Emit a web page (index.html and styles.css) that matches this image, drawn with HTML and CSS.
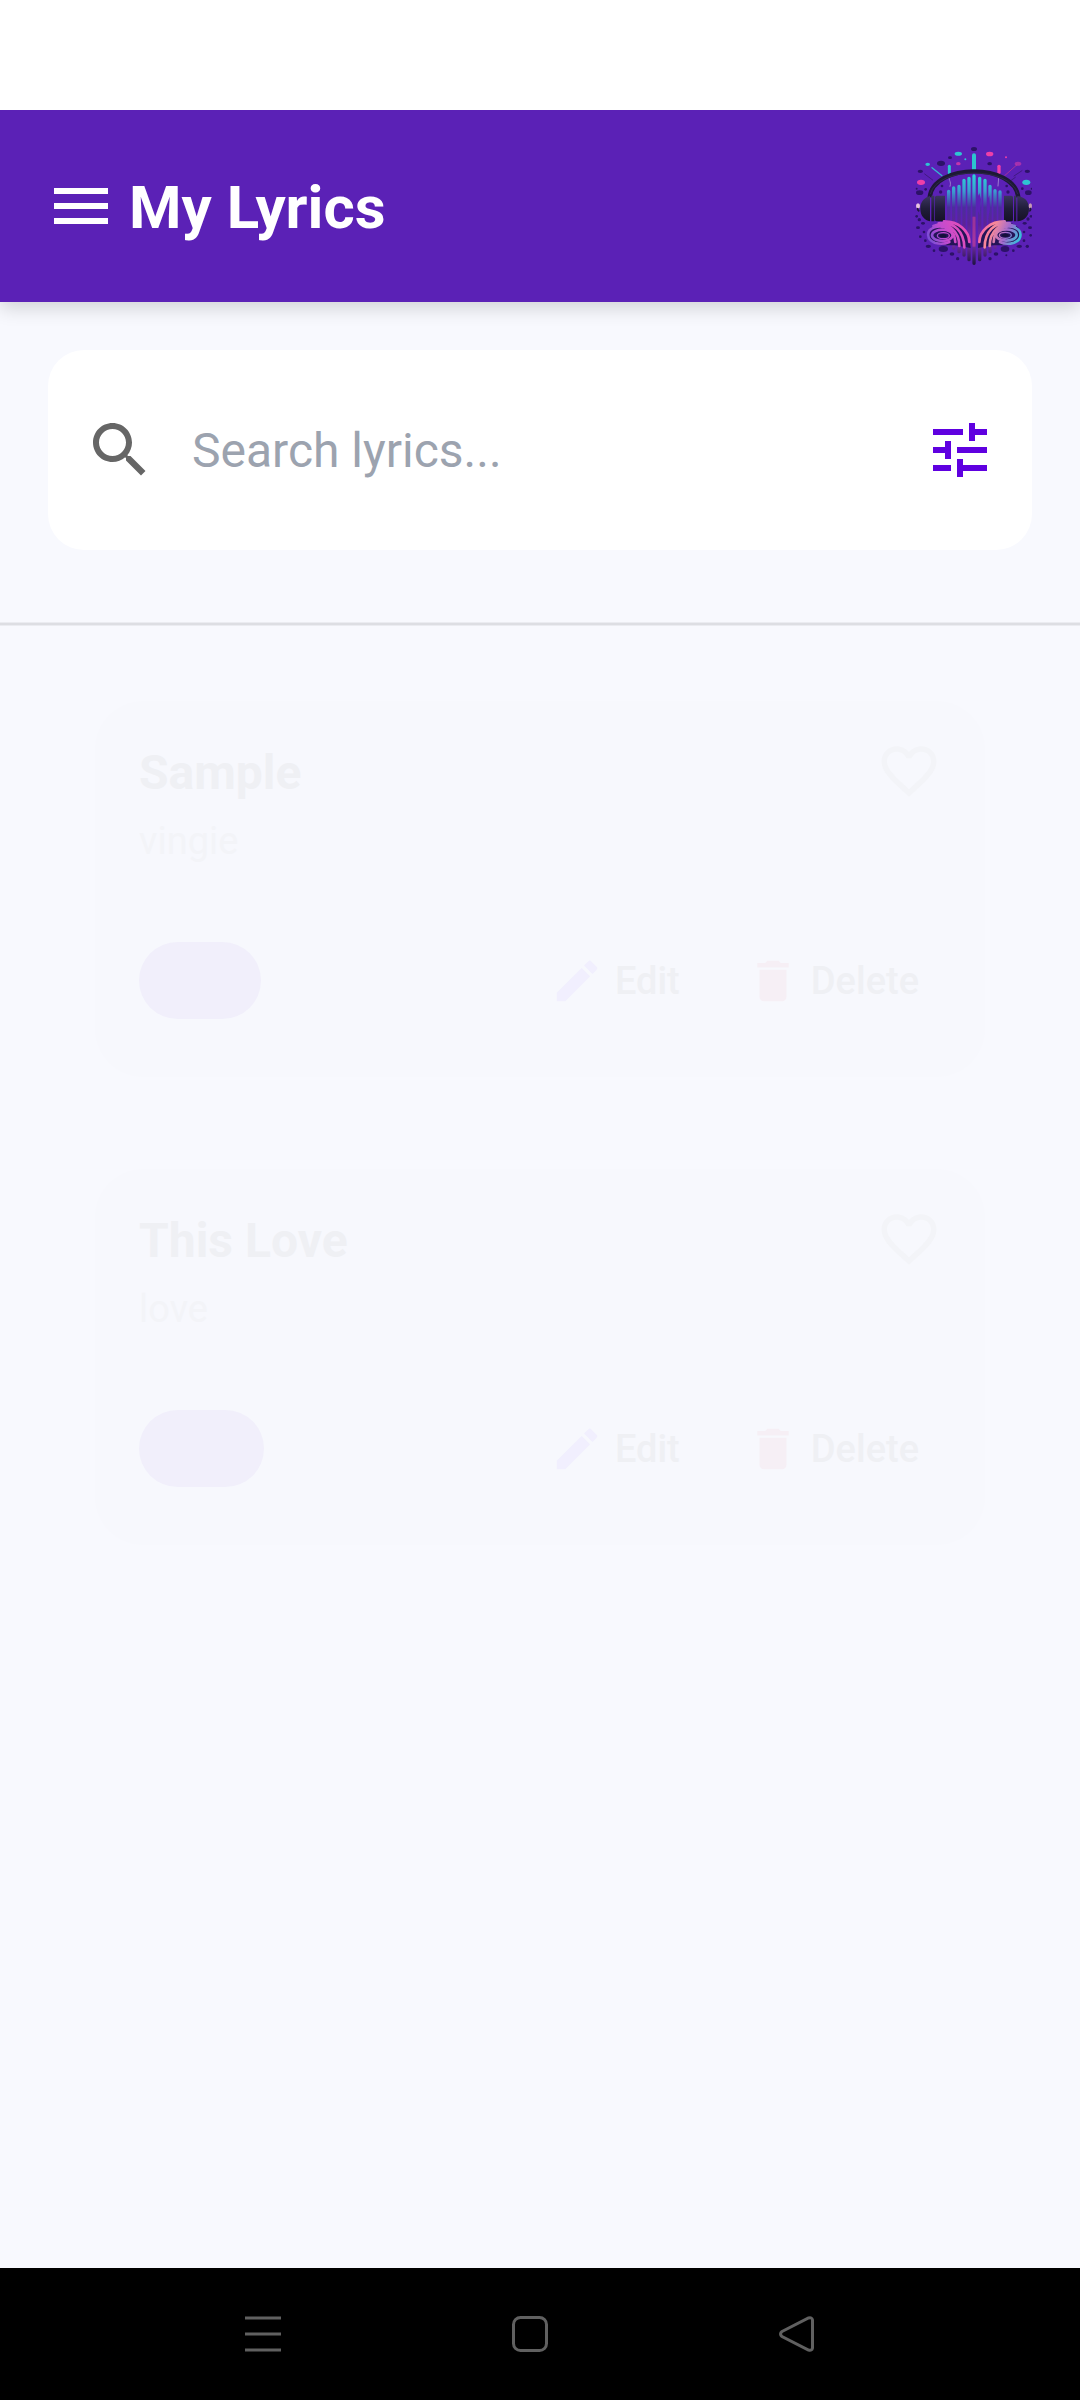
FILE: index.html
```html
<!DOCTYPE html>
<html lang="en">
<head>
<meta charset="utf-8">
<meta name="viewport" content="width=device-width, initial-scale=1">
<title>My Lyrics</title>
<link rel="stylesheet" href="styles.css">
</head>
<body>
<svg class="defs" aria-hidden="true">
  <symbol id="heart" viewBox="0 0 24 24"><path d="M16.5 3c-1.74 0-3.41.81-4.5 2.09C10.91 3.81 9.24 3 7.5 3 4.42 3 2 5.42 2 8.5c0 3.78 3.4 6.86 8.55 11.54L12 21.35l1.45-1.32C18.6 15.36 22 12.28 22 8.5 22 5.42 19.58 3 16.5 3zm-4.4 15.55l-.1.1-.1-.1C7.14 14.24 4 11.39 4 8.5 4 6.5 5.5 5 7.5 5c1.54 0 3.04.99 3.57 2.36h1.87C13.46 5.99 14.96 5 16.5 5c2 0 3.5 1.5 3.5 3.5 0 2.89-3.14 5.74-7.9 10.05z"/></symbol>
  <symbol id="pencil" viewBox="0 0 24 24"><path d="M3 17.25V21h3.75L17.81 9.94l-3.75-3.75L3 17.25zM20.71 7.04a1 1 0 0 0 0-1.41l-2.34-2.34a1 1 0 0 0-1.41 0l-1.83 1.83 3.75 3.75 1.83-1.83z"/></symbol>
  <symbol id="trash" viewBox="0 0 24 24"><path d="M6 19c0 1.100.9 2 2 2h8c1.100 0 2-.9 2-2V7H6v12zM19 4h-3.500l-1-1h-5l-1 1H5v2h14V4z"/></symbol>
</svg>
<div class="app">
  <header class="topbar">
    <button class="icon-btn" type="button" aria-label="Menu">
      <svg class="icon" viewBox="0 0 24 24" fill="#fff"><path d="M3 18h18v-2H3v2zm0-5h18v-2H3v2zm0-7v2h18V6H3z"/></svg>
    </button>
    <h1 class="title">My Lyrics</h1>
    <svg class="logo" viewBox="66 78 360 360" role="img" aria-label="Headphones logo">
      <defs>
        <linearGradient id="bars" gradientUnits="userSpaceOnUse" x1="0" y1="165" x2="0" y2="435">
          <stop offset="0" stop-color="#2ad3d6"/><stop offset=".18" stop-color="#3b9cd0"/><stop offset=".36" stop-color="#4a2f9c"/><stop offset=".55" stop-color="#5d2396"/><stop offset=".75" stop-color="#7a2fae"/><stop offset="1" stop-color="#1d1440"/>
        </linearGradient>
        <linearGradient id="spiralL" gradientUnits="userSpaceOnUse" x1="112" y1="370" x2="235" y2="310">
          <stop offset="0" stop-color="#6a4fd6"/><stop offset=".4" stop-color="#c04bd0"/><stop offset="1" stop-color="#f04fb4"/>
        </linearGradient>
        <linearGradient id="spiralR" gradientUnits="userSpaceOnUse" x1="270" y1="310" x2="395" y2="365">
          <stop offset="0" stop-color="#f45bb0"/><stop offset=".3" stop-color="#f98a98"/><stop offset=".62" stop-color="#a26bd0"/><stop offset="1" stop-color="#22d0dc"/>
        </linearGradient>
        <linearGradient id="cup" x1="0" y1="0" x2="0" y2="1">
          <stop offset="0" stop-color="#3b3560"/><stop offset=".5" stop-color="#211d3a"/><stop offset="1" stop-color="#161226"/>
        </linearGradient>
      </defs>
      <g stroke="url(#bars)" stroke-width="10" stroke-linecap="round" fill="none">
        <path d="M176 214l.1 160M191 204l.1 180M207 199l.1 196M222 181l.1 224M237 175l.1 244M252 168l.1 262M269 175l.1 244M285 181l.1 224M300 199l.1 196M315 212l.1 170M330 216l.1 150"/>
      </g>
      <path d="M262 232l6-12 5 18-4 48-7-18zM292 240l6-14 2 40-6 30z" fill="#5b21b6"/>
      <g stroke-linecap="round" stroke-width="9" fill="none">
        <path d="M252 106v40" stroke="#2cc4cf" stroke-width="12"/>
        <path d="M178 139v20" stroke="#2cc4cf"/>
        <path d="M327 139v18" stroke="#ee3fa8" stroke-width="10"/>
        <path d="M178 165c-6 14 8 18 2 34M327 162l-3 36" stroke="#9b7bd0" stroke-width="3"/>
        <path d="M126 143l30 24" stroke="#35b7d0" stroke-width="4"/>
        <path d="M104 162l24 18M396 152l-24 16M354 188l22-16" stroke="#401a80" stroke-width="3"/>
        <path d="M380 135l-36 32" stroke="#a6309c" stroke-width="3"/>
      </g>
      <path d="M119 232C130 128 374 128 385 232" fill="none" stroke="#1d1935" stroke-width="13"/>
      <path d="M121 222C142 138 362 138 383 222" fill="none" stroke="#353052" stroke-width="2"/>
      <g fill="url(#cup)">
        <path d="M120 228v76c-16-4-29-16-29-38s13-34 29-38zM124 227h9v77h-9zM135 232q0-5 5-5h25v77h-25q-5 0-5-5zM342 227h22q5 0 5 5v67q0 5-5 5h-22zM372 227h7v77h-7zM382 228c20 2 35 14 35 38s-15 36-35 38z"/>
      </g>
      <ellipse cx="84" cy="258" rx="6" ry="8" fill="#e9c4e0"/><ellipse cx="421" cy="258" rx="5" ry="8" fill="#c79bb4"/>
      <path d="M84 264q-3 6 4 10M420 264q4 6-2 10" fill="none" stroke="#201738" stroke-width="5"/>
      <g fill="#241458">
        <path d="M112 346c0-22 24-36 52-44 44-2 76 28 78 82l-34-6c-16-4-48 0-60-4-20-2-36-12-36-28z"/>
        <path d="M394 344c0-22-24-34-50-42-44-2-78 28-80 82l34-6c16-4 48 0 60-4 20-2 36-12 36-30z"/>
      </g>
      <g fill="none" stroke="url(#spiralL)" stroke-width="8" stroke-linecap="round">
        <path d="M162 304C206 304 237 332 238 366M146 310C194 304 222 336 223 382M130 318C176 302 208 336 208 378M196 366C194 328 160 314 134 322C108 330 108 358 134 368C146 372 164 372 178 366"/>
        <ellipse cx="157" cy="346" rx="31" ry="17"/>
        <ellipse cx="160" cy="347" rx="18" ry="9" stroke-width="4"/>
      </g>
      <g fill="none" stroke="url(#spiralR)" stroke-width="8" stroke-linecap="round">
        <path d="M344 304C300 304 269 332 268 366M360 310C312 304 284 336 284 382M374 318C330 302 299 336 299 378M311 366C312 328 346 314 372 322C398 330 398 358 372 368C360 372 342 372 330 366"/>
        <ellipse cx="349" cy="345" rx="31" ry="17"/>
        <ellipse cx="346" cy="346" rx="18" ry="9" stroke-width="4"/>
      </g>
      <g fill="#15103a"><ellipse cx="159" cy="347" rx="10" ry="5"/><ellipse cx="346" cy="346" rx="10" ry="5"/></g>
      <path d="M252 290v90" stroke="#b73a9c" stroke-width="9" opacity=".7"/>
      <g fill="#2fc3d2"><ellipse cx="205" cy="101" rx="11" ry="6"/><ellipse cx="113" cy="133" rx="7" ry="5"/><ellipse cx="409" cy="187" rx="12" ry="8"/><circle cx="226" cy="118" r="3"/></g>
      <g fill="#ee3fa8"><ellipse cx="299" cy="102" rx="11" ry="7"/><ellipse cx="93" cy="187" rx="12" ry="8"/><ellipse cx="205" cy="131" rx="7" ry="5" opacity=".7"/><ellipse cx="384" cy="131" rx="10" ry="6" opacity=".5"/><circle cx="348" cy="112" r="3"/></g>
      <g fill="#2c1268">
        <ellipse cx="252" cy="87" rx="9" ry="6"/><ellipse cx="153" cy="130" rx="12" ry="8"/><ellipse cx="180" cy="113" rx="6" ry="4"/><ellipse cx="299" cy="131" rx="7" ry="5"/><ellipse cx="91" cy="154" rx="8" ry="5"/><ellipse cx="412" cy="154" rx="8" ry="5"/><ellipse cx="89" cy="218" rx="11" ry="7"/><ellipse cx="415" cy="218" rx="10" ry="7"/>
        <circle cx="107" cy="208" r="4"/><circle cx="397" cy="206" r="4"/><circle cx="156" cy="198" r="4"/><circle cx="152" cy="216" r="5"/><circle cx="350" cy="198" r="4"/><circle cx="354" cy="216" r="5"/><circle cx="80" cy="206" r="3"/><circle cx="425" cy="206" r="3"/>
        <circle cx="80" cy="289" r="4"/><circle cx="88" cy="299" r="5"/><ellipse cx="99" cy="310" rx="6" ry="4"/><ellipse cx="84" cy="323" rx="6" ry="4"/><circle cx="102" cy="336" r="4"/><circle cx="91" cy="350" r="4"/><circle cx="106" cy="362" r="4"/><ellipse cx="115" cy="379" rx="8" ry="5"/><circle cx="132" cy="392" r="4"/><ellipse cx="160" cy="387" rx="14" ry="9"/><ellipse cx="186" cy="402" rx="7" ry="5"/><circle cx="155" cy="406" r="3"/><circle cx="203" cy="416" r="5"/>
        <circle cx="423" cy="289" r="4"/><circle cx="414" cy="297" r="5"/><ellipse cx="404" cy="310" rx="6" ry="4"/><ellipse cx="420" cy="323" rx="6" ry="4"/><circle cx="402" cy="336" r="4"/><circle cx="422" cy="346" r="4"/><circle cx="402" cy="362" r="4"/><ellipse cx="388" cy="379" rx="8" ry="5"/><circle cx="370" cy="392" r="4"/><ellipse cx="345" cy="387" rx="13" ry="9"/><ellipse cx="318" cy="402" rx="7" ry="5"/><circle cx="349" cy="406" r="3"/><circle cx="300" cy="416" r="5"/><circle cx="412" cy="379" r="5"/>
      </g>
    </svg>
  </header>

  <main class="content">
    <form class="search-area" role="search">
      <div class="search">
        <svg class="icon" viewBox="0 0 24 24" fill="#666" aria-hidden="true"><path d="M15.500 14h-.79l-.28-.27C15.410 12.590 16 11.110 16 9.500 16 5.910 13.090 3 9.500 3S3 5.910 3 9.500 5.910 16 9.500 16c1.610 0 3.090-.59 4.230-1.570l.27.28v.79l5 4.990L20.490 19l-4.990-5zm-6 0C7.010 14 5 11.990 5 9.500S7.010 5 9.500 5 14 7.010 14 9.500 11.990 14 9.500 14z"/></svg>
        <input class="search-input" type="text" placeholder="Search lyrics..." aria-label="Search lyrics">
        <button class="icon-btn" type="button" aria-label="Filters">
          <svg class="icon" viewBox="0 0 24 24" fill="#5f00e0"><path d="M3 17v2h6v-2H3zM3 5v2h10V5H3zm10 16v-2h8v-2h-8v-2h-2v6h2zM7 9v2H3v2h4v2h2V9H7zm14 4v-2H11v2h10zm-6-4h2V7h4V5h-4V3h-2v6z"/></svg>
        </button>
      </div>
    </form>
    <hr class="divider">
    <section class="list" aria-label="Lyrics">
      <article class="card">
        <div class="card-head">
          <h2 class="card-title">Sample</h2>
          <button class="icon-btn" type="button" aria-label="Favorite Sample"><svg class="heart"><use href="#heart"/></svg></button>
        </div>
        <p class="artist">vingie</p>
        <div class="card-foot">
          <span class="chip"></span>
          <div class="actions">
            <button class="action" type="button"><svg class="action-icon edit"><use href="#pencil"/></svg>Edit</button>
            <button class="action" type="button"><svg class="action-icon delete"><use href="#trash"/></svg>Delete</button>
          </div>
        </div>
      </article>
      <article class="card">
        <div class="card-head">
          <h2 class="card-title">This Love</h2>
          <button class="icon-btn" type="button" aria-label="Favorite This Love"><svg class="heart"><use href="#heart"/></svg></button>
        </div>
        <p class="artist">love</p>
        <div class="card-foot">
          <span class="chip chip-wide"></span>
          <div class="actions">
            <button class="action" type="button"><svg class="action-icon edit"><use href="#pencil"/></svg>Edit</button>
            <button class="action" type="button"><svg class="action-icon delete"><use href="#trash"/></svg>Delete</button>
          </div>
        </div>
      </article>
    </section>
  </main>

  <nav class="sysnav" aria-label="System">
    <button class="icon-btn" type="button" aria-label="Recent apps"><svg class="nav-icon" viewBox="0 0 36 36"><path d="M0 2h36M0 18h36M0 34h36"/></svg></button>
    <button class="icon-btn" type="button" aria-label="Home"><svg class="nav-icon" viewBox="0 0 36 36"><rect x="1.500" y="1.500" width="33" height="33" rx="7"/></svg></button>
    <button class="icon-btn" type="button" aria-label="Back"><svg class="nav-icon" viewBox="0 0 36 36"><path d="M3 15.500L29.500 2q3.500-1 4 2v28q-.5 3-4 2L3 20.500q-3-2.500 0-5z"/></svg></button>
  </nav>
</div>
</body>
</html>
```
FILE: styles.css
```css
* {
  box-sizing: border-box;
}

body {
  margin: 0;
  background: #f8f9fe;
  font-family: Roboto, "Liberation Sans", sans-serif;
}

h1, h2, p {
  margin: 0;
}

.defs {
  display: none;
}

.app {
  display: flex;
  flex-direction: column;
  min-height: 100vh;
  border-top: 110px solid #fff;
}

.icon-btn {
  display: flex;
  flex: none;
  padding: 0;
  border: 0;
  background: none;
}

.icon {
  display: block;
  flex: none;
  width: 72px;
  height: 72px;
}

.topbar {
  display: flex;
  align-items: center;
  gap: 12px;
  height: 192px;
  padding: 0 48px 0 45px;
  background: #5b21b6;
  box-shadow: 0 6px 18px rgba(0, 0, 0, 0.16);
  clip-path: inset(0 0 -40px 0);
}

.title {
  flex: 1;
  padding-top: 4px;
  color: #fff;
  font-size: 60px;
  font-weight: 700;
  line-height: 72px;
}

.logo {
  flex: none;
  width: 120px;
  height: 120px;
}

.content {
  flex: 1;
}

.search-area {
  padding: 48px 48px 72px;
}

.search {
  display: flex;
  align-items: center;
  gap: 36px;
  height: 200px;
  padding: 0 36px;
  border-radius: 36px;
  background: #fff;
}

.search-input {
  flex: 1;
  min-width: 0;
  padding: 2px 0 0;
  border: 0;
  outline: 0;
  background: none;
  color: #222;
  font: 400 48px/60px Roboto, "Liberation Sans", sans-serif;
}

.search-input::placeholder {
  color: #9ca3af;
  opacity: 1;
}

.divider {
  height: 4px;
  margin: 0;
  border: 1px solid #ebecf1;
  border-width: 1px 0;
  background: #dddee3;
}

.list {
  display: flex;
  flex-direction: column;
  gap: 92px;
  padding: 75px 95px 92px;
}

.card {
  padding: 37px 43px 58px 44px;
  border-radius: 48px;
  background: #f7f8fd;
}

.card-head {
  display: flex;
  align-items: flex-start;
  justify-content: space-between;
}

.card-title {
  padding-top: 7px;
  color: #eff0f4;
  font-size: 48px;
  font-weight: 700;
  line-height: 56px;
}

.heart {
  width: 66px;
  height: 66px;
  fill: #f3f4f8;
}

.artist {
  margin-top: 14px;
  color: #f3f4f8;
  font-size: 38px;
  line-height: 46px;
}

.card-foot {
  display: flex;
  align-items: center;
  justify-content: space-between;
  margin-top: 78px;
}

.chip {
  width: 122px;
  height: 77px;
  border-radius: 39px;
  background: #f1effb;
}

.chip-wide {
  width: 125px;
}

.actions {
  display: flex;
  gap: 21px;
}

.action {
  display: flex;
  align-items: center;
  gap: 11px;
  padding: 0 23px 0 22px;
  border: 0;
  background: none;
  color: #eff0f4;
  font: 500 38px/46px Roboto, "Liberation Sans", sans-serif;
}

.action-icon {
  width: 54px;
  height: 54px;
}

.edit {
  fill: #f1effe;
}

.delete {
  fill: #f6eff5;
}

.sysnav {
  display: grid;
  grid-template-columns: repeat(3, 1fr);
  place-items: center;
  height: 132px;
  padding: 0 150px 0 130px;
  background: #000;
}

.nav-icon {
  width: 36px;
  height: 36px;
  fill: none;
  stroke: #606060;
  stroke-width: 3;
}
```
